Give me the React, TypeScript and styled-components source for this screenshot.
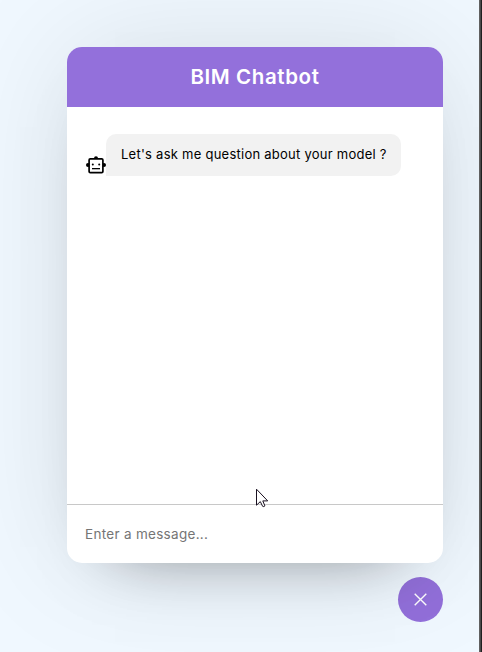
import React from "react";
import styled, { createGlobalStyle } from "styled-components";

const GlobalStyle = createGlobalStyle`
  *, *::before, *::after { box-sizing: border-box; }
  html, body { margin: 0; padding: 0; }
  body { background: #f0f8ff; overflow: hidden; font-family: Inter, "Open Sans", sans-serif; }
`;

const Page = styled.main`
  display: flex;
  width: 482px;
  height: 652px;
  overflow: hidden;
  background: #f0f8ff;
`;

const Content = styled.div`
  flex: 1;
  min-width: 0;
  overflow: hidden;
  padding: 47px 36px 0 67px;
  display: flex;
  flex-direction: column;
  align-items: flex-end;
  gap: 14px;
`;

const WindowEdge = styled.div`
  width: 3px;
  flex: none;
  background: linear-gradient(to right, #606060 0 1px, #494949 1px 2px, #202020 2px 3px);
`;

const ChatWindow = styled.section`
  position: relative;
  z-index: 1;
  width: 376px;
  height: 516px;
  display: flex;
  flex-direction: column;
  background: #fff;
  border-radius: 15px;
  overflow: hidden;
  box-shadow: 0 0 128px 0 rgba(0, 0, 0, 0.1), 0 32px 64px -48px rgba(0, 0, 0, 0.5);
`;

const Header = styled.header`
  height: 60px;
  flex: none;
  display: flex;
  align-items: center;
  justify-content: center;
  background: #9370db;
`;

const Title = styled.h1`
  margin: 0;
  color: #fff;
  font-size: 20.5px;
  font-weight: 600;
  line-height: 30px;
  letter-spacing: 0.6px;
`;

const Messages = styled.ul`
  flex: 1;
  margin: 0;
  padding: 27px 18px 0 19px;
  list-style: none;
`;

const BotMessage = styled.li`
  display: flex;
  align-items: flex-end;
`;

const BotIcon = styled.svg`
  display: block;
  flex: none;
`;

const Bubble = styled.p`
  margin: 0;
  width: 295px;
  height: 42px;
  padding: 0 0 0 15px;
  line-height: 41px;
  border-radius: 10px 10px 10px 0;
  background: #f2f2f2;
  color: #000;
  font-size: 13px;
  letter-spacing: 0.25px;
  white-space: nowrap;
`;

const Composer = styled.div`
  height: 59px;
  flex: none;
  border-top: 1px solid #c8c8c8;
`;

const MessageInput = styled.input`
  display: block;
  width: 100%;
  height: 58px;
  padding: 0 18px;
  border: 0;
  outline: 0;
  background: transparent;
  font-family: inherit;
  font-size: 13.5px;
  letter-spacing: 0.3px;
  &::placeholder { color: #757575; opacity: 1; }
`;

const CloseButton = styled.button`
  width: 45px;
  height: 45px;
  padding: 0;
  border: 0;
  border-radius: 50%;
  display: grid;
  place-items: center;
  background: #9370db;
`;

const Pointer = styled.svg`
  position: absolute;
  left: 189px;
  top: 441px;
`;

export default function App() {
  return (
    <>
      <GlobalStyle />
      <Page>
        <Content>
          <ChatWindow>
            <Header>
              <Title>BIM Chatbot</Title>
            </Header>
            <Messages>
              <BotMessage>
                <BotIcon width="20" height="20" viewBox="0 0 20 20">
                  <circle cx="10" cy="2.2" r="2" />
                  <circle cx="2" cy="9" r="2" />
                  <circle cx="18" cy="9" r="2" />
                  <rect x="3.1" y="2.9" width="13.8" height="13.8" rx="1.2" fill="#fff" stroke="#000" strokeWidth="1.7" />
                  <circle cx="6.8" cy="8.4" r="1" />
                  <circle cx="13.2" cy="8.4" r="1" />
                  <rect x="6" y="12" width="8" height="1.3" />
                </BotIcon>
                <Bubble>Let's ask me question about your model ?</Bubble>
              </BotMessage>
            </Messages>
            <Composer>
              <MessageInput placeholder="Enter a message..." />
            </Composer>
            <Pointer width="14" height="21" viewBox="0 0 14 21">
              <path
                d="M.5 1.2V17.2L4.3 13.6L6.6 18.3Q7.8 19.1 8.9 17.9L6.8 12.9H11.7Z"
                fill="#fff"
                stroke="#191020"
                strokeWidth="1"
              />
            </Pointer>
          </ChatWindow>
          <CloseButton aria-label="Close">
            <svg width="13" height="13" viewBox="0 0 13 13">
              <path d="M.7.7L12.3 12.3M12.3.7L.7 12.3" stroke="#fff" strokeWidth="1.4" />
            </svg>
          </CloseButton>
        </Content>
        <WindowEdge />
      </Page>
    </>
  );
}
